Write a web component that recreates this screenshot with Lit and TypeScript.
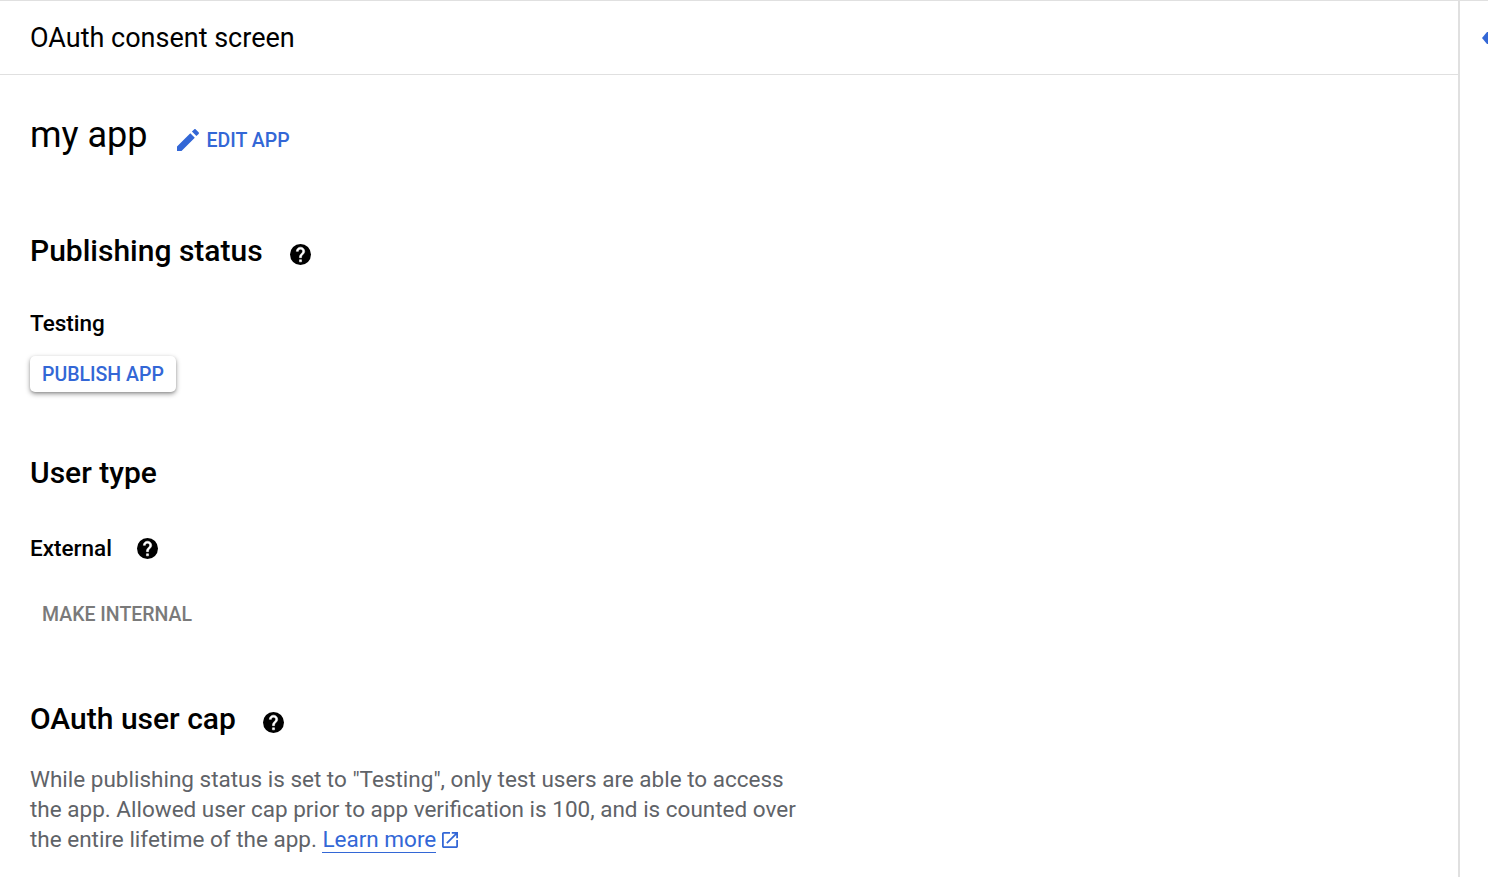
import { LitElement, html, css } from "lit";
import { customElement } from "lit/decorators.js";

const help = () => html`<svg class="help" viewBox="2 2 20 20" aria-hidden="true"><circle cx="12" cy="12" r="10" fill="#000"/><path fill="#fff" stroke="#fff" stroke-width=".5" d="M13 19h-2v-2h2v2zm2.070-7.750l-.9.92C13.450 12.900 13 13.500 13 15h-2v-.5c0-1.100.45-2.100 1.170-2.830l1.240-1.260c.37-.36.59-.86.59-1.410 0-1.100-.9-2-2-2s-2 .9-2 2H8c0-2.210 1.790-4 4-4s4 1.790 4 4c0 .88-.36 1.680-.93 2.250z"/></svg>`;

@customElement("app-root")
export class AppRoot extends LitElement {
  static styles = css`
    :host { display: block; height: 877px; overflow: hidden; font-family: Roboto, "Liberation Sans", sans-serif; color: #000; background: #fff; }
    .page { display: flex; height: 877px; border-top: 1px solid #e0e0e0; box-sizing: border-box; }
    .main { width: 1458px; flex: none; }
    .rail { flex: 1; border-left: 2px solid #e0e0e0; display: flex; justify-content: flex-end; padding-top: 31px; align-items: flex-start; overflow: hidden; }
    .rail svg { width: 6px; height: 12px; display: block; }
    .bar { height: 73px; border-bottom: 1px solid #e0e0e0; padding-left: 30px; display: flex; align-items: center; font-size: 27px; }
    .content { padding-left: 30px; }
    .app { display: flex; align-items: center; margin-top: 37px; height: 46px; }
    .app h1 { font-size: 36px; font-weight: 400; margin: 0; }
    .edit { display: flex; align-items: center; color: #3367d6; font-size: 19.5px; font-weight: 500; margin-left: 28px; margin-top: 10px; }
    .edit svg { width: 24px; height: 24px; margin-right: 7px; }
    h2 { font-size: 30px; font-weight: 500; margin: 0; display: flex; align-items: center; }
    .help { width: 21px; height: 21px; flex: none; margin-left: 27px; position: relative; top: 3px; }
    .s1 { margin-top: 72px; height: 40px; }
    .s1 .help { top: 4px; }
    .label { font-size: 22.5px; font-weight: 500; }
    .testing { margin-top: 38px; height: 30px; line-height: 30px; }
    .pub { margin-top: 18px; display: inline-flex; align-items: center; height: 36px; padding: 0 12px; border-radius: 5px; background: #fff; color: #3367d6; font-size: 19.5px; font-weight: 500; box-shadow: 0 1px 2px rgba(0,0,0,.12), 0 2px 5px rgba(0,0,0,.4); }
    .s2 { margin-top: 60px; height: 40px; }
    .ext { margin-top: 41px; display: flex; align-items: center; height: 30px; }
    .ext .help { margin-left: 25px; top: 0; }
    .make { margin-top: 37px; padding-left: 12px; height: 30px; line-height: 30px; font-size: 19.5px; font-weight: 500; color: #7a7a7a; }
    .s3 { margin-top: 68px; height: 40px; }
    .s3 .help { top: 4px; }
    p { margin: 26px 0 0; width: 780px; font-size: 22.5px; line-height: 30px; color: #5f6368; }
    a { color: #3367d6; text-decoration: none; border-bottom: 1px solid #3367d6; }
    .ext-link { width: 16px; height: 16px; margin-left: 6px; vertical-align: -1px; }
  `;

  render() {
    return html`<div class="page">
      <div class="main">
        <div class="bar">OAuth consent screen</div>
        <div class="content">
          <div class="app"><h1>my app</h1>
            <div class="edit"><svg viewBox="0 0 24 24"><path fill="#3367d6" d="M1 18.500V23h4.500L18.800 9.700l-4.500-4.500L1 18.500zM22.600 5.900c.5-.5.5-1.200 0-1.700l-2.800-2.800c-.5-.5-1.200-.5-1.700 0L15.900 3.600l4.500 4.500 2.200-2.200z"/></svg>EDIT APP</div>
          </div>
          <h2 class="s1">Publishing status ${help()}</h2>
          <div class="label testing">Testing</div>
          <div class="pub">PUBLISH APP</div>
          <h2 class="s2">User type</h2>
          <div class="label ext">External ${help()}</div>
          <div class="make">MAKE INTERNAL</div>
          <h2 class="s3">OAuth user cap ${help()}</h2>
          <p>While publishing status is set to "Testing", only test users are able to access the app. Allowed user cap prior to app verification is 100, and is counted over the entire lifetime of the app. <a href="#">Learn more</a><svg class="ext-link" viewBox="3 3 18 18"><path fill="#3367d6" d="M19 19H5V5h7V3H5c-1.110 0-2 .9-2 2v14c0 1.100.89 2 2 2h14c1.100 0 2-.9 2-2v-7h-2v7zM14 3v2h3.590l-9.830 9.830 1.410 1.410L19 6.410V10h2V3h-7z"/></svg></p>
        </div>
      </div>
      <div class="rail"><svg viewBox="0 0 6 12"><path fill="#3367d6" d="M5 0L0 6l5 6h1V0z"/></svg></div>
    </div>`;
  }
}
